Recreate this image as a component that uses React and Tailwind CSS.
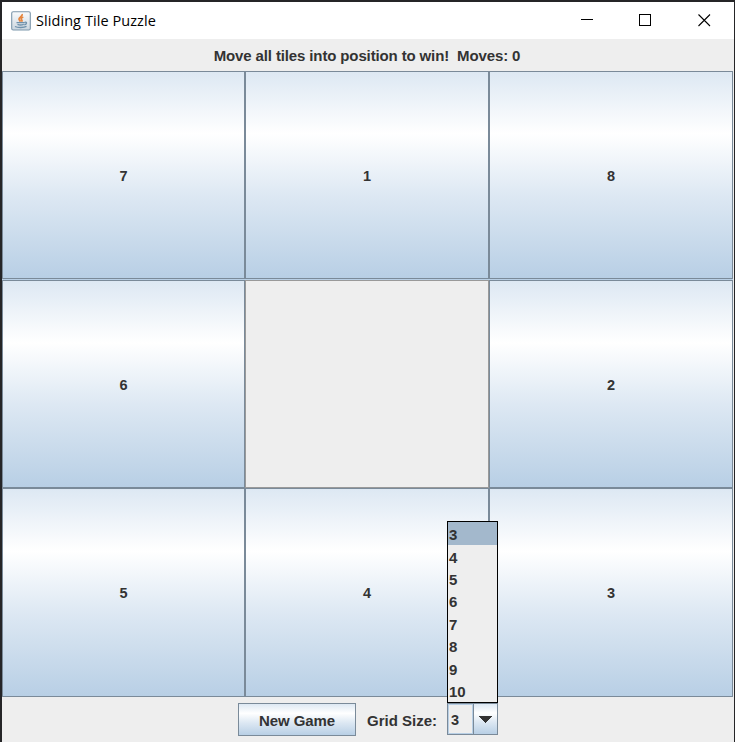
import React from "react";

const metal =
  "bg-[linear-gradient(to_bottom,#dde8f3_0%,#ffffff_30%,#dde8f3_60%,#b8cfe5_100%)] border border-[#7a8a99]";

function Tile({ value }) {
  if (value === null) {
    return <div className="border border-[#999999] bg-[#eeeeee]" />;
  }
  return (
    <button className={`${metal} flex items-center justify-center pt-[3px] text-[14.5px]`}>
      {value}
    </button>
  );
}

function JavaIcon() {
  return (
    <svg width="20" height="20" viewBox="0 0 20 20" fill="none">
      <defs>
        <linearGradient id="frame" x1="0" y1="0" x2="0" y2="1">
          <stop offset="0" stopColor="#fafbfc" />
          <stop offset="1" stopColor="#cbd6df" />
        </linearGradient>
      </defs>
      <rect x="0.7" y="0.7" width="18.6" height="18.3" rx="1.5" fill="url(#frame)" stroke="#7d97ab" strokeWidth="1.1" />
      <path d="M11.2 3c.8 2-3.2 3.200-3.200 5 0 1.200 1 1.600 1.500 2.600M12.300 6c-2.600 1-2.400 2-1.500 3 .6.8.2 1.300-.3 1.700" stroke="#e5843c" strokeWidth="1.700" />
      <path d="M5.500 11.600h8.200M6.500 13.400c1.500.6 4.500.6 6.300 0M13.800 11.200c2.400-.4 2.200 2-.5 2.600M4 15.500c2.500 1.300 9 1.300 11.500-.1" stroke="#6f91ab" strokeWidth="1.400" />
    </svg>
  );
}

function TitleBar() {
  return (
    <header className="flex h-[37px] items-center bg-white pl-[9px]">
      <JavaIcon />
      <h1 className="ml-[5px] w-[130px] whitespace-nowrap font-['Open_Sans','Noto_Sans',sans-serif] text-[14.5px] font-normal leading-[20px] tracking-[0.07px] text-black">
        Sliding Tile Puzzle
      </h1>
      <div className="ml-auto mr-[23px] flex items-center">
        <svg className="mr-[45px]" width="13" height="13" viewBox="0 0 13 13" shapeRendering="crispEdges">
          <path d="M0 5.500h12" stroke="#000" />
        </svg>
        <svg className="mr-[47px] -translate-y-px" width="12" height="12" viewBox="0 0 12 12" shapeRendering="crispEdges">
          <path d="M.5.500h11v11H.5z" fill="none" stroke="#000" />
        </svg>
        <svg width="13" height="13" viewBox="0 0 13 13">
          <path d="M.5.500l11.500 11.500M12 .5L.5 12" stroke="#000" strokeWidth="1.100" />
        </svg>
      </div>
    </header>
  );
}

const rows = [
  ["7", "1", "8"],
  ["6", null, "2"],
  ["5", "4", "3"],
];
const sizes = ["3", "4", "5", "6", "7", "8", "9", "10"];

function SizePopup() {
  return (
    <ul className="absolute bottom-[32px] left-0 h-[182px] w-[51px] border border-black bg-[#eeeeee] pt-[1px]">
      {sizes.map((size, i) => (
        <li
          key={size}
          className={`flex items-center pl-[1px] leading-none ${i === 0 ? "-mt-px h-[23.4px] pt-[2px] bg-[#a3b8cc]" : "h-[22.4px] pt-[1px]"}`}
        >
          {size}
        </li>
      ))}
    </ul>
  );
}

export default function App() {
  return (
    <div className="h-[742px] w-[735px] overflow-hidden border-l-2 border-r border-t-2 border-[#252527] bg-[#eeeeee] font-['Liberation_Sans',Arial,sans-serif] text-[14.5px] font-bold text-[#333333]">
      <TitleBar />
      <p className="flex h-[32px] items-center justify-center whitespace-pre pr-[2px] pt-[2px] text-[15px] tracking-[-0.13px]">
        {"Move all tiles into position to win!  Moves: 0"}
      </p>
      <main className="grid h-[626px] w-[731px] grid-cols-[243px_244px_244px] grid-rows-[208px_208px_209px] bg-[#b8cfe5]">
        {rows.map((row, r) => (
          <div key={r} className={`col-span-3 grid grid-cols-subgrid ${r > 0 ? "translate-y-px" : ""}`}>
            {row.map((value, c) => (
              <Tile key={c} value={value} />
            ))}
          </div>
        ))}
      </main>
      <footer className="flex h-[45px] items-start pl-[236px] pt-[6px] text-[15px]">
        <button className={`${metal} h-[33px] w-[118px] pt-[3px] tracking-[-0.1px]`}>New Game</button>
        <span className="ml-[11px] w-[80px] whitespace-nowrap pt-[7px]">Grid Size:</span>
        <div className="relative flex h-[32px] w-[51px]">
          <div className="flex w-[26px] items-center border border-r-0 border-[#7a8a99] p-0">
            <span className="flex h-full w-full items-center border border-[#b8cfe5] pl-[2px] pt-[3px] text-[14.5px]">3</span>
          </div>
          <button className={`${metal} flex w-[25px] items-center justify-center pr-px`}>
            <svg width="14" height="7" viewBox="0 0 14 7" shapeRendering="crispEdges">
              <path d="M0 0h14L7 7z" fill="#333" />
            </svg>
          </button>
          <SizePopup />
        </div>
      </footer>
    </div>
  );
}
